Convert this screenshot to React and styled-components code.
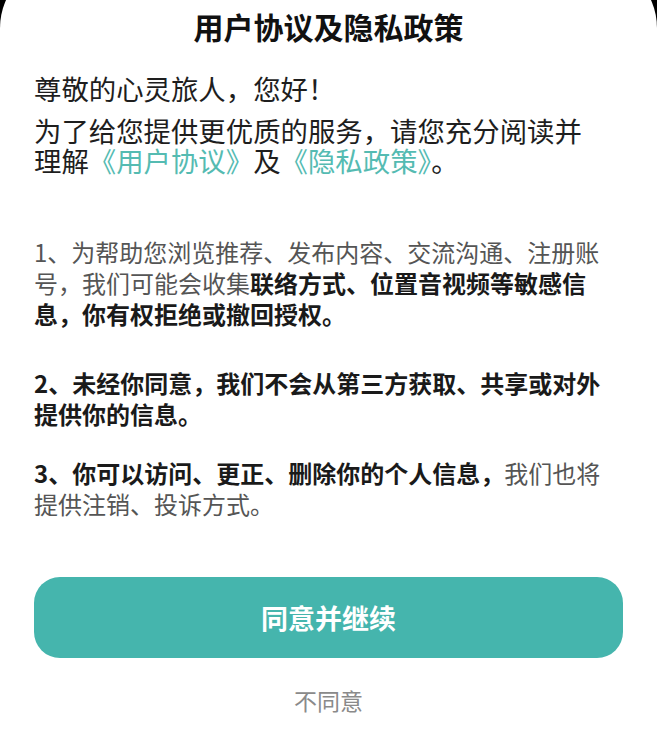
import React from "react";
import styled, { createGlobalStyle } from "styled-components";

const GlobalStyle = createGlobalStyle`
  html, body {
    margin: 0;
    padding: 0;
    background: #000;
    overflow: hidden;
  }
  body {
    font-family: "Noto Sans CJK SC", "Noto Sans", sans-serif;
  }
`;

const Sheet = styled.div`
  margin-top: -40px;
  min-height: 800px;
  background: #fff;
  border-radius: 68px 68px 0 0;
  padding: 46px 34px 0;
  box-sizing: border-box;
  display: flex;
  flex-direction: column;
`;

const Title = styled.h1`
  margin: 0;
  font-size: 30px;
  line-height: 40px;
  font-weight: 700;
  color: #111;
  text-align: center;
`;

const Intro = styled.div`
  margin-top: 27px;
  display: flex;
  flex-direction: column;
  gap: 12px;
  max-width: 566px;
`;

const IntroLine = styled.p`
  margin: 0;
  font-size: 27.4px;
  line-height: 30px;
  color: #1e1e1e;
`;

const DocLink = styled.a`
  color: #55bbb2;
  text-decoration: none;
`;

const Clauses = styled.div`
  margin-top: 61px;
  max-width: 578px;
`;

const Clause = styled.p`
  margin: ${({ $gap }) => $gap || 0}px 0 0;
  font-size: 24px;
  line-height: 31px;
  color: #555;
`;

const Strong = styled.b`
  font-weight: 700;
  color: #1a1a1a;
`;

const AgreeButton = styled.button`
  margin-top: 58px;
  height: 81px;
  width: 100%;
  border: none;
  border-radius: 26px;
  background: #45b5ad;
  color: #fff;
  font-family: inherit;
  font-size: 27px;
  font-weight: 700;
  cursor: pointer;
`;

const Decline = styled.button`
  margin: 27px auto 0;
  border: none;
  background: none;
  padding: 0;
  font-family: inherit;
  font-size: 23px;
  line-height: 30px;
  color: #8a8a8a;
  cursor: pointer;
`;

export default function App() {
  return (
    <>
      <GlobalStyle />
      <Sheet>
        <Title>用户协议及隐私政策</Title>
        <Intro>
          <IntroLine>尊敬的心灵旅人，您好！</IntroLine>
          <IntroLine>
            为了给您提供更优质的服务，请您充分阅读并理解
            <DocLink href="#">《用户协议》</DocLink>及
            <DocLink href="#">《隐私政策》</DocLink>。
          </IntroLine>
        </Intro>
        <Clauses>
          <Clause>
            1、为帮助您浏览推荐、发布内容、交流沟通、注册账号，我们可能会收集
            <Strong>联络方式、位置音视频等敏感信息，你有权拒绝或撤回授权。</Strong>
          </Clause>
          <Clause $gap={38}>
            <Strong>2、未经你同意，我们不会从第三方获取、共享或对外提供你的信息。</Strong>
          </Clause>
          <Clause $gap={28}>
            <Strong>3、你可以访问、更正、删除你的个人信息，</Strong>
            我们也将提供注销、投诉方式。
          </Clause>
        </Clauses>
        <AgreeButton>同意并继续</AgreeButton>
        <Decline>不同意</Decline>
      </Sheet>
    </>
  );
}
